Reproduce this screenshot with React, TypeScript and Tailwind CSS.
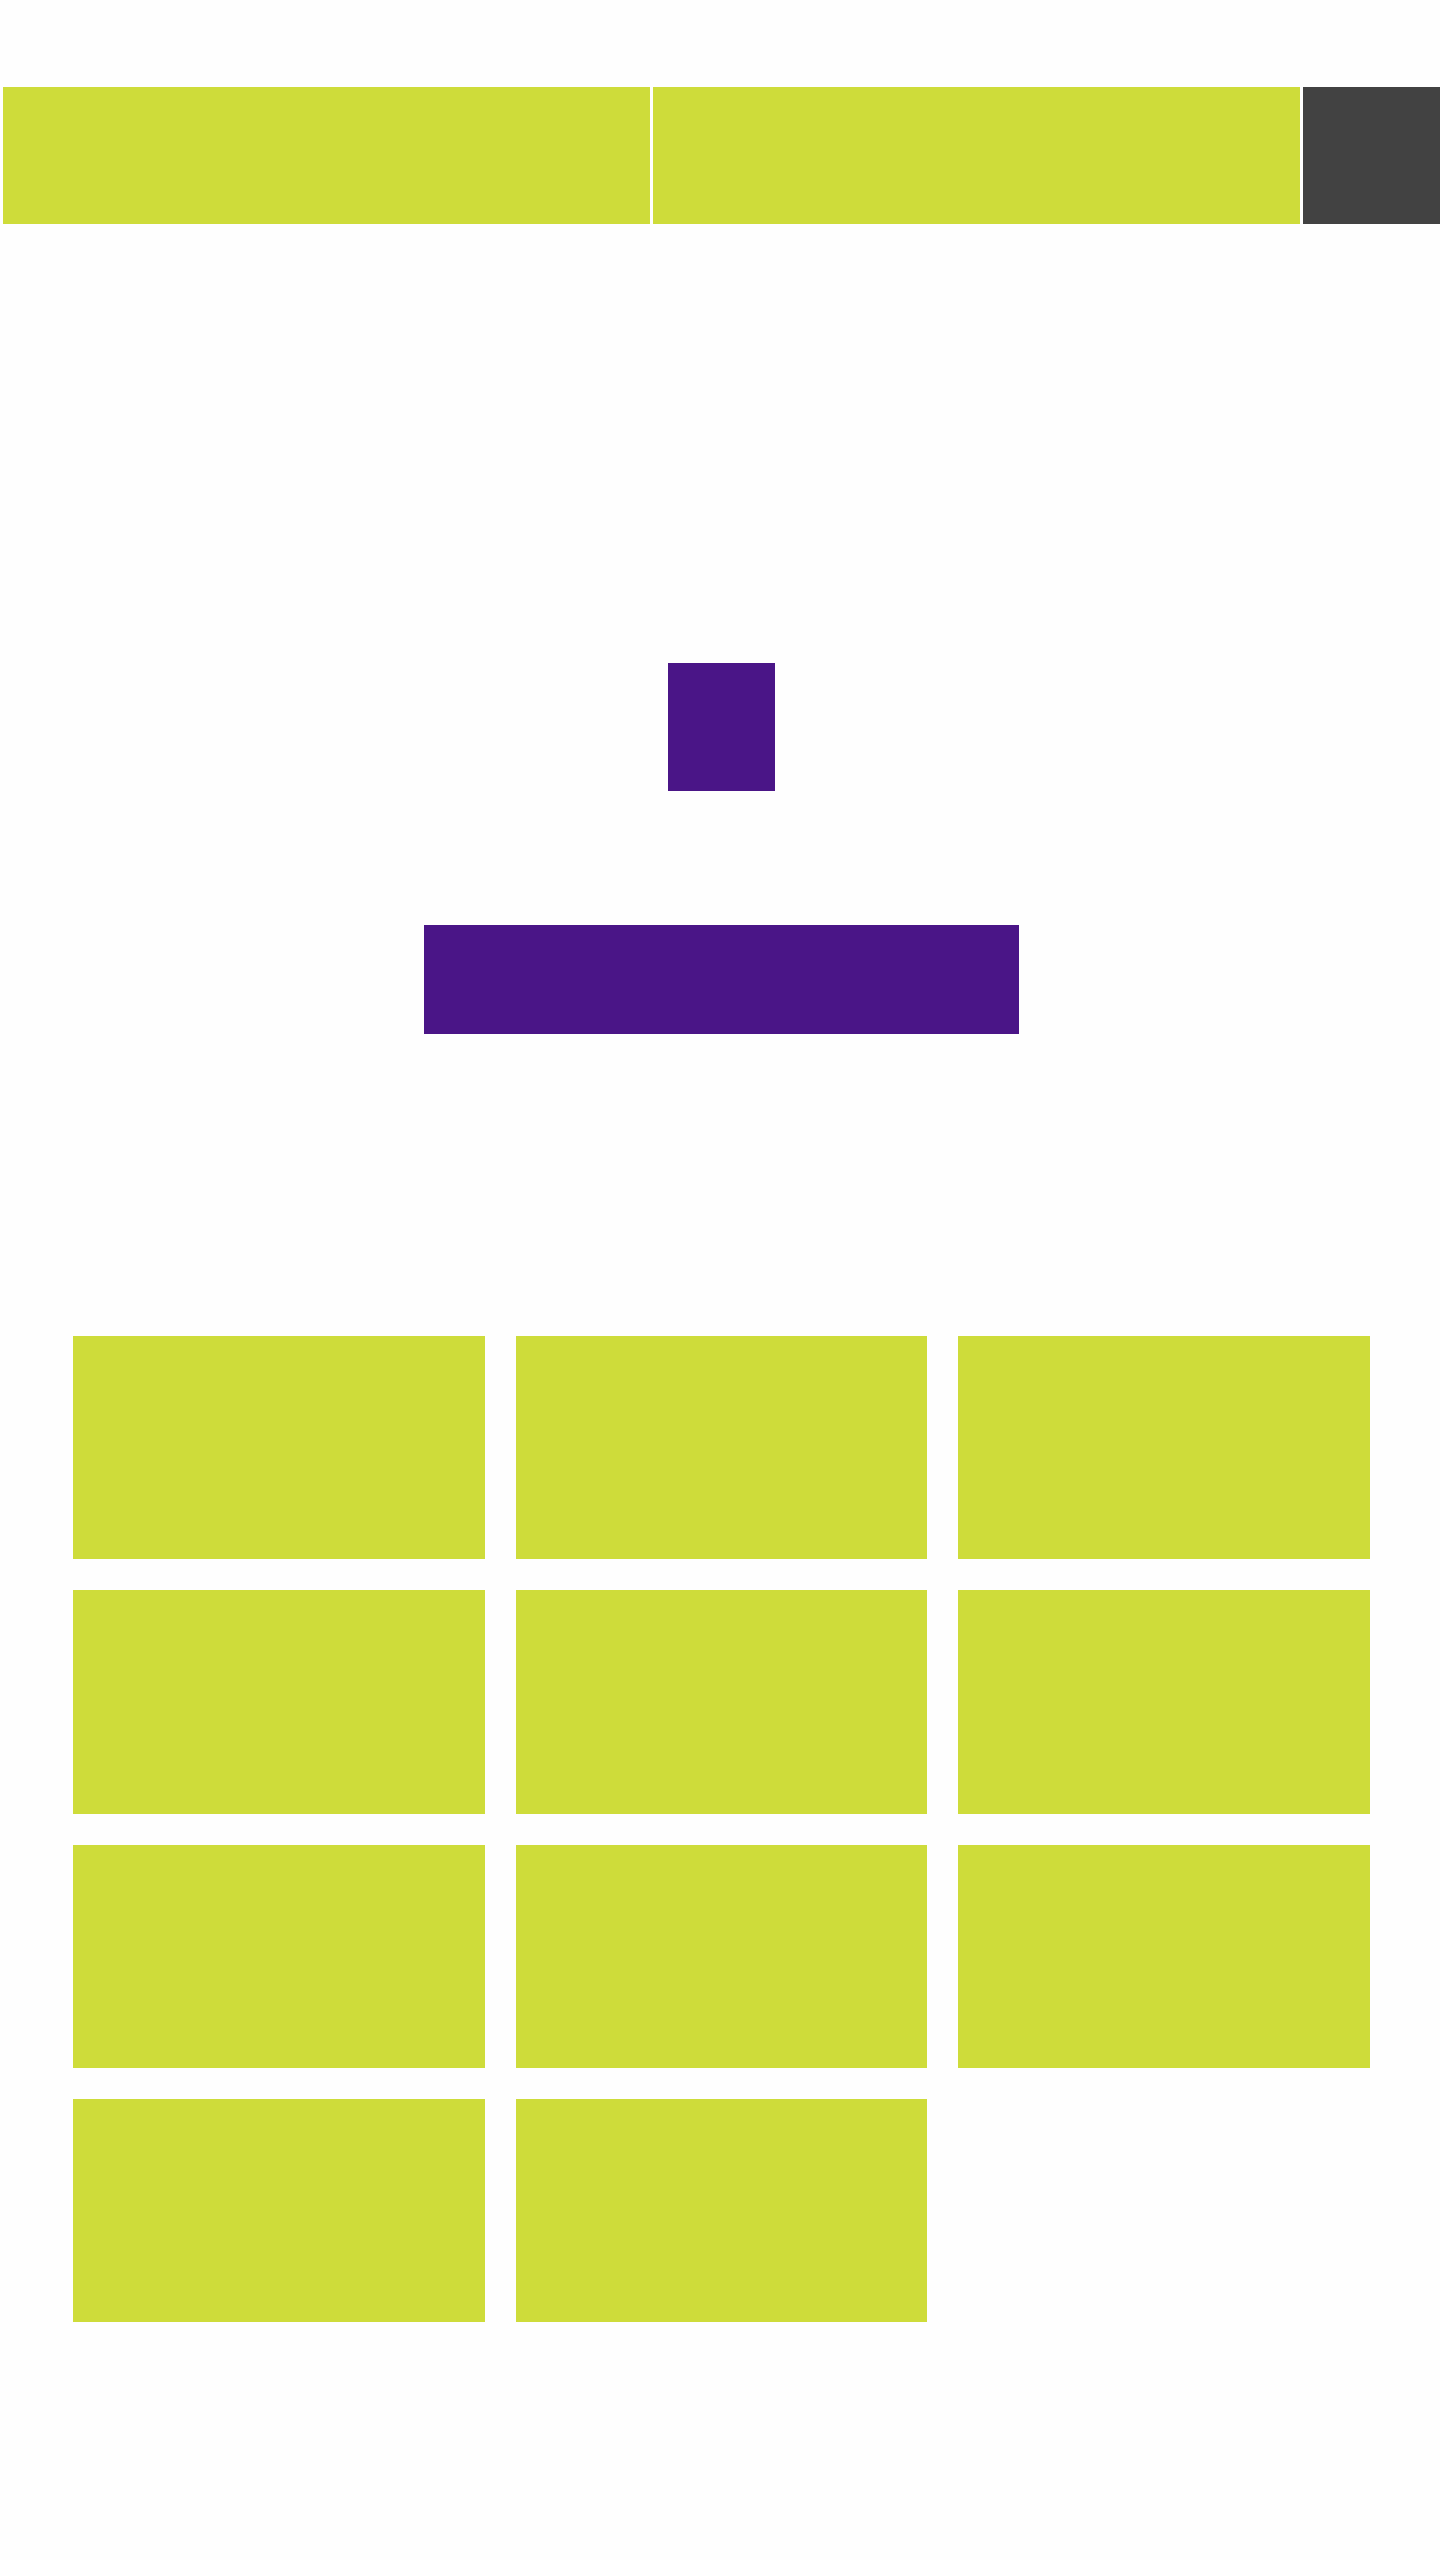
import React from 'react';

const tiles = Array.from({ length: 11 }, (_, i) => i);

const App: React.FC = () => {
  return (
    <div className="min-h-[2560px] w-full bg-[#fefefe] overflow-hidden">
      {/* top strip */}
      <div className="mt-[87px] flex gap-[3px] pl-[3px] overflow-hidden">
        <div className="h-[137px] w-[647px] shrink-0 bg-[#cedc3a]" />
        <div className="h-[137px] w-[647px] shrink-0 bg-[#cedc3a]" />
        <div className="h-[137px] w-[647px] shrink-0 bg-[#424242]" />
      </div>

      {/* logo block */}
      <div className="mt-[439px] flex justify-center pl-[3px]">
        <div className="h-[128px] w-[107px] bg-[#4a1587]" />
      </div>

      {/* button */}
      <div className="mt-[134px] flex justify-center pl-[3px]">
        <div className="h-[109px] w-[595px] bg-[#4a1587]" />
      </div>

      {/* grid */}
      <div className="mt-[302px] ml-[73px] grid w-[1297px] grid-cols-3 gap-x-[31px] gap-y-[31px]">
        {tiles.map((t) => (
          <div key={t} className="h-[223.3px] bg-[#cedc3a]" />
        ))}
      </div>
    </div>
  );
};

export default App;
